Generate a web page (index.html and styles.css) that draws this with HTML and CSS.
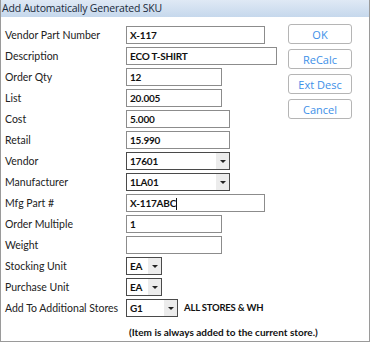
FILE: index.html
```html
<!DOCTYPE html>
<html lang="en">
<head>
  <meta charset="UTF-8">
  <title>Add Automatically Generated SKU</title>
  <link rel="stylesheet" href="styles.css">
</head>
<body>
  <div class="dialog">
    <div class="titlebar">Add Automatically Generated SKU</div>

    <div class="content">
      <!-- Felder -->
      <div class="form">
        <div class="row"><label>Vendor Part Number</label><div class="field w-md">X-117</div></div>
        <div class="row"><label>Description</label><div class="field w-lg">ECO T-SHIRT</div></div>
        <div class="row"><label>Order Qty</label><div class="field w-sm">12</div></div>
        <div class="row"><label>List</label><div class="field w-sm">20.005</div></div>
        <div class="row"><label>Cost</label><div class="field w-num">5.000</div></div>
        <div class="row"><label>Retail</label><div class="field w-num">15.990</div></div>
        <div class="row"><label>Vendor</label><div class="field combo w-num">17601<span class="arrow"></span></div></div>
        <div class="row"><label>Manufacturer</label><div class="field combo w-num">1LA01<span class="arrow"></span></div></div>
        <div class="row"><label>Mfg Part #</label><div class="field w-md">X-117ABC<span class="caret"></span></div></div>
        <div class="row"><label>Order Multiple</label><div class="field w-sm">1</div></div>
        <div class="row"><label>Weight</label><div class="field w-sm"></div></div>
        <div class="row"><label>Stocking Unit</label><div class="field combo w-unit">EA<span class="arrow"></span></div></div>
        <div class="row"><label>Purchase Unit</label><div class="field combo w-unit">EA<span class="arrow"></span></div></div>
        <div class="row"><label>Add To Additional Stores</label><div class="field combo w-store">G1<span class="arrow"></span></div><span class="note">ALL STORES &amp; WH</span></div>
        <div class="hint">(Item is always added to the current store.)</div>
      </div>

      <!-- Buttons -->
      <div class="buttons">
        <button>OK</button>
        <button>ReCalc</button>
        <button>Ext Desc</button>
        <button>Cancel</button>
      </div>
    </div>
  </div>
</body>
</html>
```

FILE: styles.css
```css
body {
  margin: 0;
  padding: 0;
  background: #fff;
  font-family: Lato, 'Open Sans', sans-serif;
}
.dialog {
  width: 368px;
  height: 341px;
  border: 1px solid #9a9a9a;
  border-top: none;
  background: #fff;
}
.titlebar {
  height: 17px;
  line-height: 17px;
  padding-left: 1px;
  font-family: 'Open Sans', sans-serif;
  font-size: 10.5px;
  color: #1a2a3a;
  background: linear-gradient(to bottom, #dfe9f5, #c6d8ec);
  letter-spacing: -0.2px;
}
.content {
  display: flex;
  padding-top: 7px;
}
.form {
  width: 283px;
}
.row {
  display: flex;
  align-items: center;
  height: 21px;
  white-space: nowrap;
}
.row label {
  flex: none;
  width: 121px;
  padding-left: 4px;
  font-size: 10.5px;
  color: #222;
}
.field {
  position: relative;
  flex: none;
  box-sizing: border-box;
  height: 18px;
  line-height: 16px;
  border: 1px solid #8c8c8c;
  padding-left: 3px;
  font-size: 10px;
  font-weight: bold;
  letter-spacing: -0.2px;
  color: #111;
}
.w-sm { width: 96px; }
.w-num { width: 104px; }
.w-md { width: 139px; }
.w-lg { width: 151px; }
.w-unit { width: 36px; }
.w-store { width: 52px; }
.combo {
  border-color: #4a4a4a;
}
.arrow {
  position: absolute;
  right: 0;
  top: 0;
  width: 13px;
  height: 16px;
  background: #ececec;
}
.arrow::after {
  content: "";
  position: absolute;
  left: 4px;
  top: 7px;
  border-left: 3px solid transparent;
  border-right: 3px solid transparent;
  border-top: 3px solid #222;
}
.caret {
  display: inline-block;
  width: 1px;
  height: 12px;
  background: #111;
  vertical-align: middle;
}
.note {
  margin-left: 6px;
  font-size: 9.5px;
  font-weight: bold;
  letter-spacing: -0.2px;
  color: #111;
}
.hint {
  margin-top: 8px;
  padding-left: 128px;
  font-size: 10px;
  font-weight: bold;
  color: #111;
  white-space: nowrap;
}
.buttons {
  display: flex;
  flex-direction: column;
  gap: 5px;
  padding-left: 4px;
}
button {
  width: 64px;
  height: 20px;
  padding: 0;
  border: 1px solid #b5b5b5;
  border-radius: 3px;
  background: #fff;
  color: #3d90e8;
  font-family: 'Open Sans', sans-serif;
  font-size: 11px;
  cursor: pointer;
}
```
